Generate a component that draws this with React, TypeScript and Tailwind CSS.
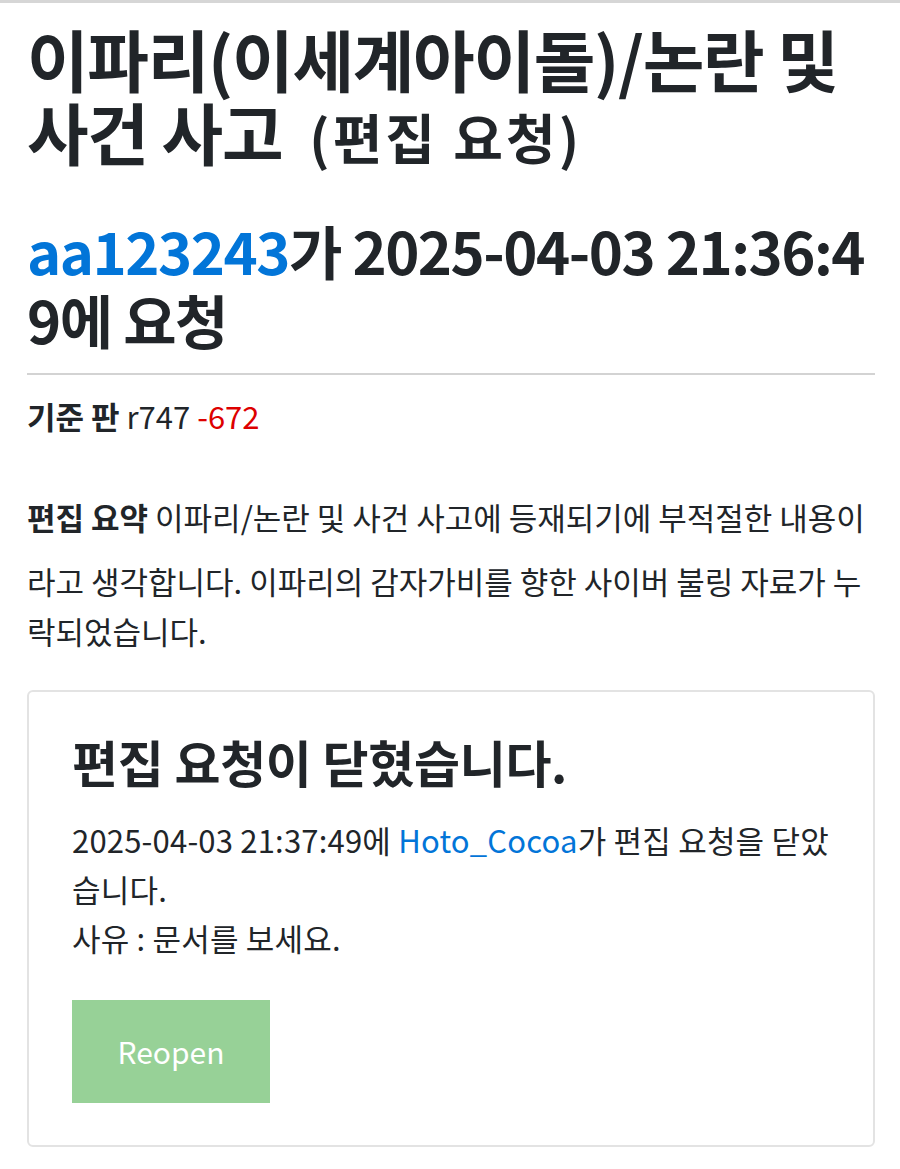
export default function App() {
  return (
    <div
      className="min-h-[1169px] bg-white text-[#212529]"
      style={{ fontFamily: '"Noto Sans CJK KR", "Noto Sans", sans-serif' }}
    >
      <div className="h-[3px] bg-[#d6d6d6]" />
      <div className="pl-[27px] pr-[25px]">
        <h1 className="mt-[18px] whitespace-nowrap text-[67px] font-bold leading-[73px] tracking-[-1.3px]">
          이파리(이세계아이돌)/논란 및
          <br />
          사건 사고
          <small className="ml-[27px] text-[54px] font-bold leading-none tracking-[3px]">(편집 요청)</small>
        </h1>

        <h2 className="mt-[49px] whitespace-nowrap text-[58px] font-bold leading-[69px] tracking-[-1.5px]">
          <a className="text-[#0275d8]">aa123243</a>가 2025-04-03 21:36:4
          <br />
          9에 요청
        </h2>

        <hr className="mt-[19px] border-t-2 border-[#d3d3d3]" />

        <p className="mt-[21px] text-[31px] leading-[40px]">
          <b>기준 판</b> r747 <span className="text-[#d00]">-672</span>
        </p>

        <div className="mt-[56px] whitespace-nowrap text-[31px] leading-[50px]">
          <div>
            <b>편집 요약</b> 이파리/논란 및 사건 사고에 등재되기에 부적절한 내용이
          </div>
          <div className="mt-[14px]">라고 생각합니다. 이파리의 감자가비를 향한 사이버 불링 자료가 누</div>
          <div>락되었습니다.</div>
        </div>

        <div className="mt-[34px] rounded-[6px] border-2 border-[#e3e3e3] px-[43px] pt-[37px] pb-[42px]">
          <h3 className="text-[50px] font-bold leading-[64px] tracking-[-0.3px]">편집 요청이 닫혔습니다.</h3>
          <p className="mt-[22px] whitespace-nowrap text-[31px] leading-[49px] tracking-[0.2px]">
            2025-04-03 21:37:49에 <a className="text-[#0275d8]">Hoto_Cocoa</a>가 편집 요청을 닫았
            <br />
            습니다.
            <br />
            사유 : 문서를 보세요.
          </p>
          <button
            type="button"
            className="mt-[38px] flex h-[103px] w-[198px] items-center justify-center bg-[#97d197] text-[30px] text-white"
          >
            Reopen
          </button>
        </div>
      </div>
    </div>
  )
}
